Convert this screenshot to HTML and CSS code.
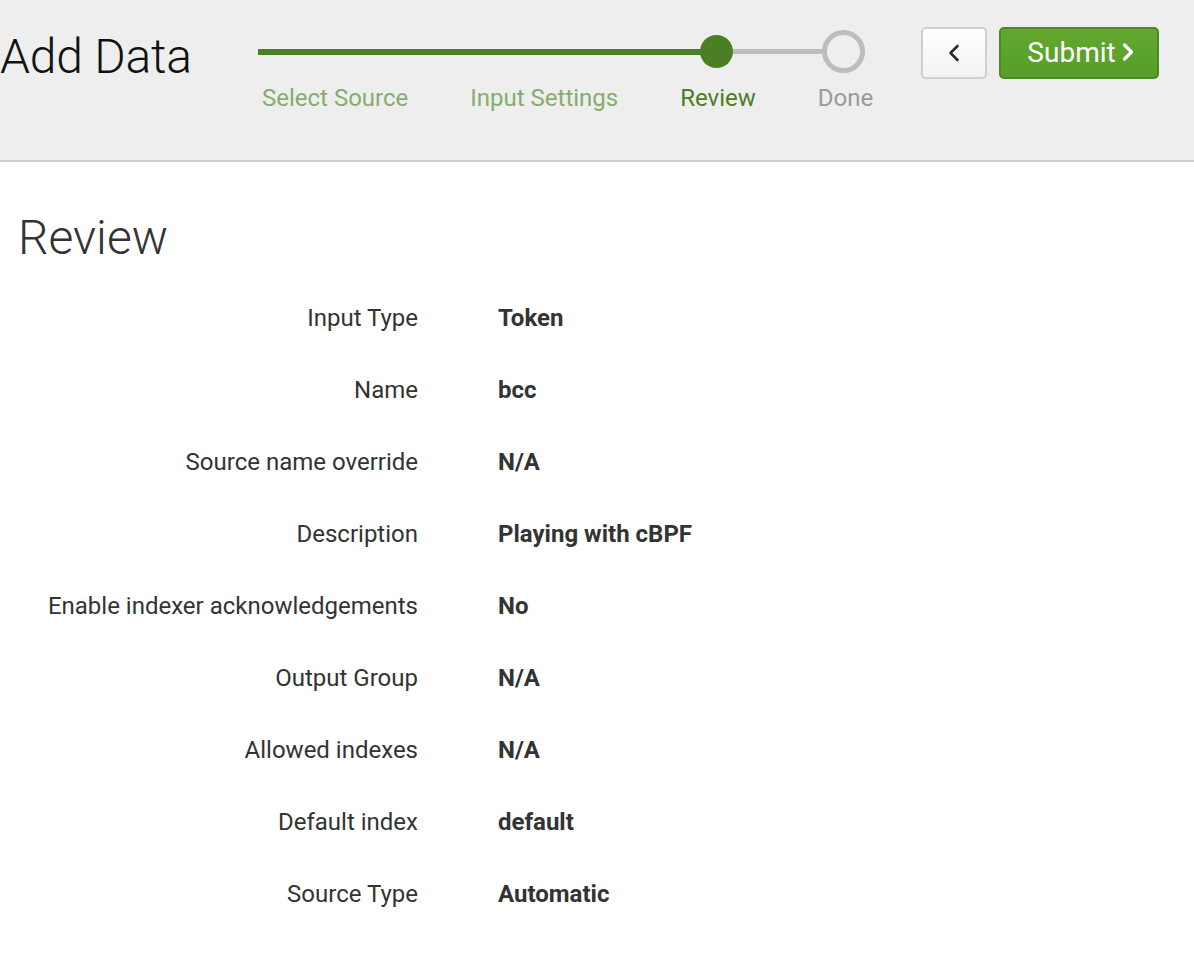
FILE: index.html
```html
<!DOCTYPE html>
<html lang="en">
<head>
<meta charset="utf-8">
<title>Add Data</title>
<link rel="stylesheet" href="styles.css">
</head>
<body>
<header class="topbar">
  <h1 class="page-title">Add Data</h1>
  <div class="stepper">
    <div class="track">
      <span class="bar bar-done"></span>
      <span class="dot dot-current"></span>
      <span class="bar bar-todo"></span>
      <span class="dot dot-todo"></span>
    </div>
    <ol class="step-labels">
      <li class="step step-done">Select Source</li>
      <li class="step step-done">Input Settings</li>
      <li class="step step-current">Review</li>
      <li class="step step-todo">Done</li>
    </ol>
  </div>
  <div class="actions">
    <button class="btn btn-back" type="button" aria-label="Back">
      <svg width="14" height="22" viewBox="0 0 14 22"><polyline points="10.5,4 3.5,11 10.5,18" fill="none" stroke="#2b2b2b" stroke-width="2.6" stroke-linecap="round" stroke-linejoin="round"/></svg>
    </button>
    <button class="btn btn-submit" type="button">
      <span>Submit</span>
      <svg width="14" height="22" viewBox="0 0 14 22"><polyline points="3.5,4 10.5,11 3.5,18" fill="none" stroke="#fff" stroke-width="3.2" stroke-linecap="round" stroke-linejoin="round"/></svg>
    </button>
  </div>
</header>
<main class="content">
  <h2 class="section-title">Review</h2>
  <dl class="review-list">
    <dt>Input Type</dt><dd>Token</dd>
    <dt>Name</dt><dd>bcc</dd>
    <dt>Source name override</dt><dd>N/A</dd>
    <dt>Description</dt><dd>Playing with cBPF</dd>
    <dt>Enable indexer acknowledgements</dt><dd>No</dd>
    <dt>Output Group</dt><dd>N/A</dd>
    <dt>Allowed indexes</dt><dd>N/A</dd>
    <dt>Default index</dt><dd>default</dd>
    <dt>Source Type</dt><dd>Automatic</dd>
  </dl>
</main>
</body>
</html>
```
FILE: styles.css
```css
* { box-sizing: border-box; }
html, body {
  margin: 0;
  padding: 0;
  background: #fff;
  font-family: Roboto, "Liberation Sans", Arial, sans-serif;
  color: #333;
}
.topbar {
  display: flex;
  align-items: flex-start;
  height: 162px;
  background: #eeeeee;
  border-bottom: 2px solid #cccccc;
  padding: 0 35px 0 0;
}
.page-title {
  flex: 0 0 258px;
  margin: 29px 0 0 0;
  font-size: 48px;
  line-height: 56px;
  font-weight: 300;
  color: #111;
  white-space: nowrap;
  letter-spacing: -0.2px;
}
.stepper {
  margin-top: 30px;
  width: 615px;
}
.track {
  display: flex;
  align-items: center;
  height: 43px;
}
.bar { display: block; }
.bar-done {
  width: 444px;
  height: 6px;
  background: #4b7f23;
  margin-right: -2px;
}
.bar-todo {
  width: 91px;
  height: 5px;
  background: #bdbdbd;
  margin: 0 -1px;
}
.dot { display: block; border-radius: 50%; position: relative; }
.dot-current {
  width: 33px;
  height: 33px;
  background: #4b7f23;
}
.dot-todo {
  width: 43px;
  height: 43px;
  border: 5px solid #bdbdbd;
  background: #eeeeee;
}
.step-labels {
  display: flex;
  gap: 62px;
  list-style: none;
  margin: 11px 0 0 0;
  padding: 0 0 0 4px;
}
.step {
  font-size: 24px;
  line-height: 28px;
  white-space: nowrap;
}
.step-done { color: #86ad6e; }
.step-current { color: #4b7f23; }
.step-todo { color: #9a9a9a; }
.actions {
  margin-left: auto;
  margin-top: 27px;
  display: flex;
  gap: 12px;
}
.btn {
  height: 52px;
  border-radius: 5px;
  display: flex;
  align-items: center;
  justify-content: center;
  cursor: pointer;
  font-family: inherit;
  padding: 0;
}
.btn-back {
  width: 66px;
  background: linear-gradient(#ffffff, #f3f3f3);
  border: 2px solid #cfcfcf;
}
.btn-submit {
  width: 160px;
  background: linear-gradient(#62a830, #579e28);
  border: 2px solid #4a8a20;
  color: #fff;
  font-size: 28px;
  font-weight: 400;
  gap: 5px;
  padding: 0 0 2px 4px;
}
.content {
  padding: 48px 0 40px 18px;
}
.section-title {
  margin: 0;
  font-size: 48px;
  line-height: 56px;
  font-weight: 300;
  color: #333;
}
.review-list {
  display: grid;
  grid-template-columns: 400px auto;
  column-gap: 80px;
  margin: 16px 0 0 0;
  font-size: 24px;
  line-height: 72px;
}
.review-list dt {
  text-align: right;
  color: #333;
  white-space: nowrap;
}
.review-list dd {
  margin: 0;
  font-weight: 700;
  color: #333;
}
```
